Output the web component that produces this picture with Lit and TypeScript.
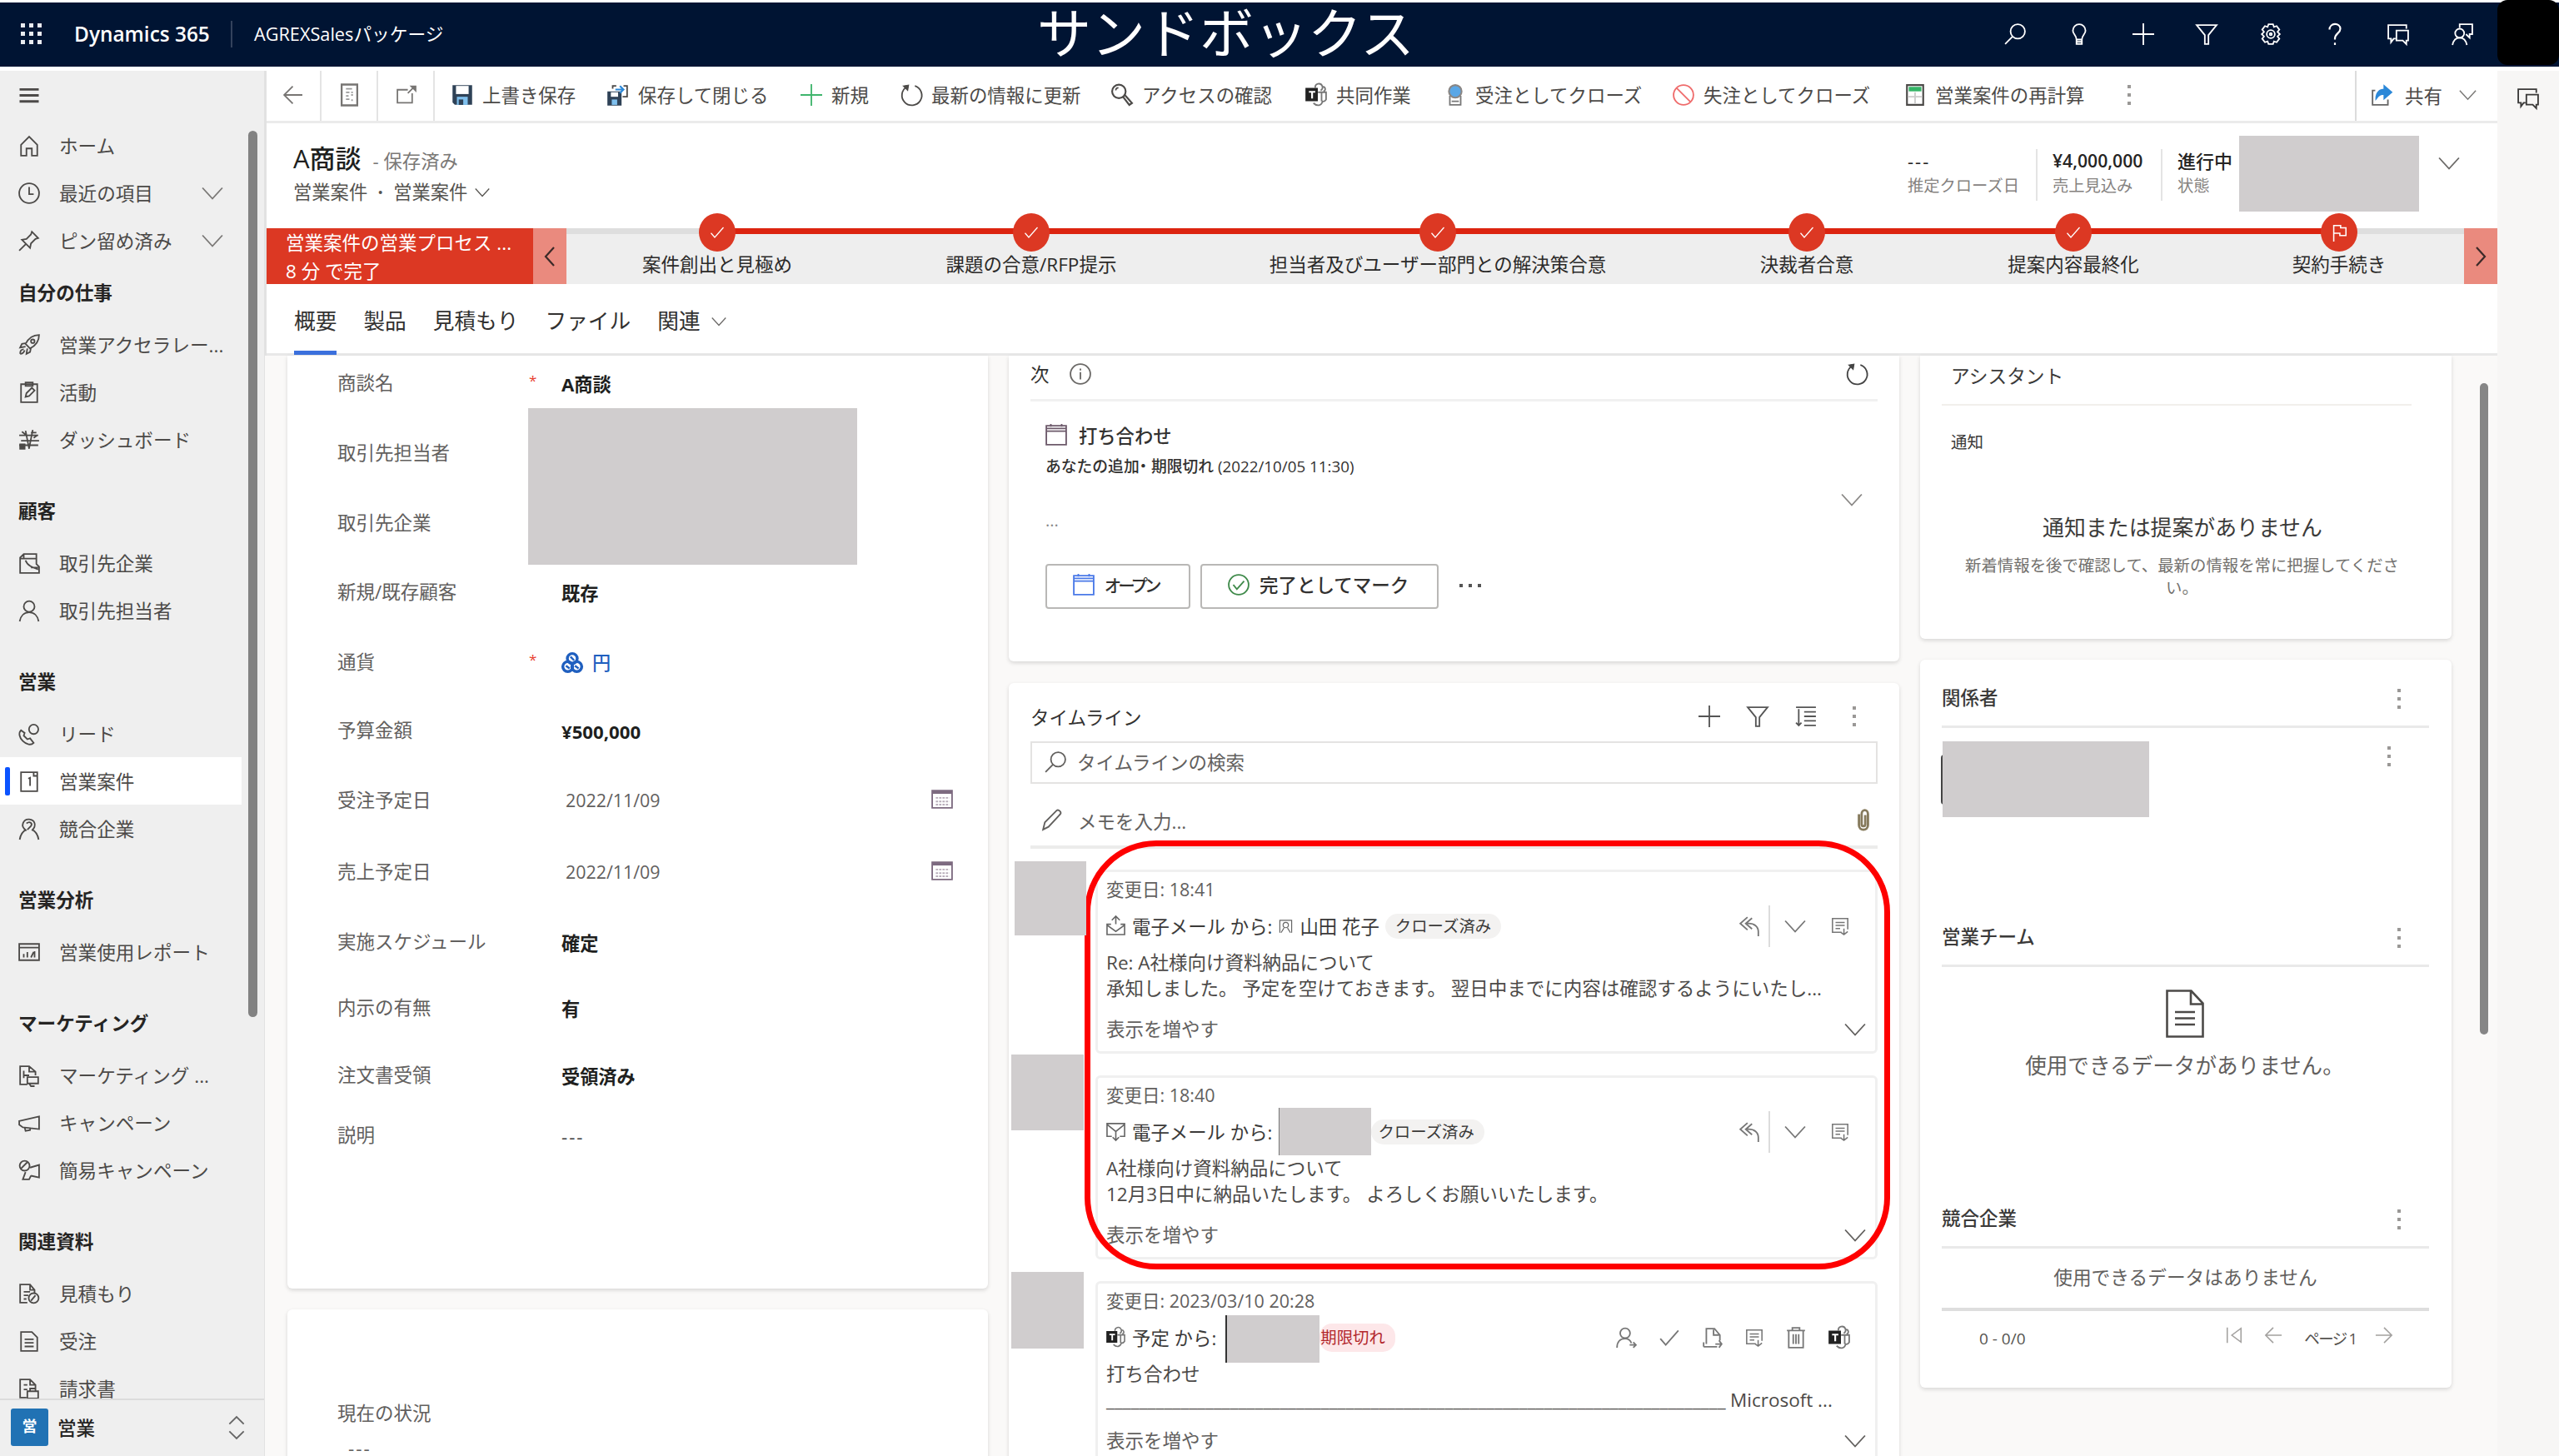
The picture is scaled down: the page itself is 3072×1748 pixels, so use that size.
import {css, html, LitElement, nothing, svg, TemplateResult} from "lit";
import {customElement, property} from "lit/decorators.js";
import {classMap} from "lit/directives/class-map.js";
import {styleMap} from "lit/directives/style-map.js";

// All glyphs are drawn on a 24x24 grid with the current text colour.
const glyphs: Record<string, TemplateResult> = {
    menu: svg`<path d="M0 4.5h24M0 12h24M0 19.5h24" stroke-width="3"/>`,
    home: svg`<path d="M3 11 12 2l9 9v12h-6v-8H9v8H3z"/>`,
    clock: svg`<circle cx="12" cy="12" r="11"/><path d="M12 5v8h5"/>`,
    pin: svg`<path d="M15 2l7 7-3 1-5 5-1 5-9-9 5-1 5-5zM8 16l-7 7"/>`,
    rocket: svg`<path d="M23 1c-7 0-12 4-15 10l5 5C19 13 23 8 23 1zM9 10l-5 1-2 4 6-1M14 15l-1 5-4 2 1-6M2 22c0-3 1-5 4-5M2 22c3 0 4-1 5-4"/><circle cx="16" cy="8" r="2"/>`,
    activity: svg`<path d="M3 3h18v20H3zM8 1h8v4H8zM8 17l1-4 6-6 3 3-6 6z"/>`,
    dashboard: svg`<path d="M1 7h21M3 13h20M1 18h21M8 2l4 20M16 1l-4 20M4 3l5 4M14 4h6M17 10l4-3"/><path d="M2 17h5v5H2z" fill="currentColor"/>`,
    account: svg`<path d="M2 23V6l4-4h14v11l3 3v7zM6 2v5H2M6 7h14M8 9c2 6 8 8 14 10M14 17h8"/>`,
    person: svg`<circle cx="12" cy="7.5" r="6"/><path d="M1.5 24c1-6 5-10 10.500-10s9.500 4 10.500 10"/>`,
    lead: svg`<circle cx="17" cy="7" r="5.200"/><path d="M3 8c-3 3-2 8 2 12s9 5 12 2l-4-5-3 1-4-4 1-3z"/>`,
    opportunity: svg`<path d="M3 2h18v21H3zM17 2v4h4M11 9l2-1v9"/>`,
    competitor: svg`<path d="M1.500 24c1-6 3-9 7-11M22.500 24c-1-6-3-9-7-11M9 14c-8-5-3-13 3-12.500S21 8 15 14M9 6c4-3 7 0 5 3l-4 4"/>`,
    report: svg`<path d="M1 3h22v18H1zM1 7h22M6 18v-4M10 18v-6M14 18l3-6M18 18v-7"/>`,
    list: svg`<path d="M10 22H2V2h10l7 6v4M12 2v6h7M6 7v8M6 12h6M10 14h12v7H10zM12 21l2 3h4"/>`,
    campaign: svg`<path d="M1 10 23 5v14L5 17l-4-3zM7 17l1 4 5-1v-3"/>`,
    quick: svg`<path d="M13 9l10-3v14l-9-2M8 14l-3 8h7l2-4"/><circle cx="7" cy="7" r="5.500"/><path d="M3 10l7-7"/>`,
    quote: svg`<path d="M10 22H2V2h11l5 6v3M13 2v6h5M6 10h7M6 14h5M6 18h3"/><circle cx="17" cy="17" r="5.500"/><path d="M14 20l5-6"/>`,
    order: svg`<path d="M3 2h12l6 6v15H3zM7 10h10M7 14h10M7 18h10"/>`,
    invoice: svg`<path d="M9 22H2V2h11l6 6v4M13 2v6h6M6 8h4M6 13h4M10 15h12v8H10zM13 15v-3h6v3"/>`,
    updown: svg`<path d="M4 8l8-8 8 8M4 16l8 8 8-8"/>`,
    down: svg`<path d="M1 6l11 12L23 6"/>`,
    left: svg`<path d="M17 1 7 12l10 11"/>`,
    right: svg`<path d="M7 1l10 11L7 23"/>`,
    back: svg`<path d="M23 12H2M12 2 2 12l10 10"/>`,
    forward: svg`<path d="M1 12h21M12 2l10 10-10 10"/>`,
    first: svg`<path d="M3 2v20M21 3v18L9 12z"/>`,
    form: svg`<path d="M3 0h18v24H3z" stroke-width="2.200"/><path d="M8 5h7M8 9h4M14 9h2M8 13h3M14 12h2M8 17h4M15 17v2" stroke="#999"/>`,
    popout: svg`<path d="M14 6H2v15h17V10M14 10l7-7"/><path d="M18 2h5v5z" fill="currentColor"/>`,
    save: svg`<path d="M2 2h20v20H4l-2-2z" fill="#2f4257" stroke="#2f4257"/><path d="M5 2h14v9H5z" fill="#fff" stroke="none"/><path d="M6 14h12v9H6z" fill="#7fc0ee" stroke="none"/><path d="M8 17h5v6H8z" fill="#2f4257" stroke="none"/>`,
    saveclose: svg`<path d="M1 9h14v14H1z" fill="#2f4257" stroke="#2f4257"/><path d="M4 9h8v5H4z" fill="#fff" stroke="none"/><path d="M5 17h6v6H5z" fill="#7fc0ee" stroke="none"/><path d="M6 5V2h4M18 2h4v12h-5"/><path d="M9 6h8M14 2l4 4-4 4" stroke="#2b88d8" stroke-width="2"/>`,
    plus: svg`<path d="M12 0v24M0 12h24"/>`,
    refresh: svg`<path d="M16 2a11 11 0 1 1-9 1"/><path d="M3 2l6-1-1 6z" fill="currentColor" stroke-width="1"/>`,
    key: svg`<circle cx="8.500" cy="8" r="7.500" stroke-width="2"/><path d="M13 14l7 9 3-2-8-9" stroke-width="2"/><path d="M5 7a3 3 0 0 1 3-3" stroke-width="1.500"/>`,
    teams: svg`<path d="M11 4a4 4 0 1 1 6 3M19 3a2.500 2.500 0 1 1 1 5M14 9h9v8c-2 3-4 2-4 2-1 5-6 6-10 2M18 9v10" stroke="#777"/><path d="M1 5h12v13H1z" fill="#222" stroke="#222"/><path d="M4 8.500h7M7.500 8.500V16" stroke="#fff" stroke-width="2"/>`,
    ribbon: svg`<path d="M6 13v10h12V13M8 19h8" stroke="#777"/><circle cx="12" cy="8" r="7" fill="#5aa7e6" stroke="#8a8684" stroke-width="2"/>`,
    ban: svg`<circle cx="12" cy="12" r="11"/><path d="M4.500 4.500l15 15"/>`,
    calc: svg`<path d="M3 1h18v22H3z" stroke-width="2"/><path d="M5 3h14v5H5z" fill="#35b567" stroke="none"/><path d="M12 9v13M4 14h16" stroke="#ccc"/>`,
    share: svg`<path d="M5 7H2v16h17v-6" stroke="#666"/><path d="M6 16c0-7 4-10 9-10V2l8 7-8 7v-5c-4 0-6 1-9 5z" fill="#2b88d8" stroke="#2b88d8"/>`,
    search: svg`<circle cx="15" cy="9" r="8"/><path d="M9.500 14.500 1 23"/>`,
    bulb: svg`<path d="M9 18c0-5-4-6-4-10a7 7 0 0 1 14 0c0 4-4 5-4 10zM9 18v5h6v-5M9 20.500h6"/>`,
    filter: svg`<path d="M1 2h22l-9 11v10h-4V13z"/>`,
    gear: svg`<path d="M9.500 1h5l1 3 3-1 3 4-2 2.500 2.500 2.500-2.500 2.500 2 2.500-3 4-3-1-1 3h-5l-1-3-3 1-3-4 2-2.500L2 12l2.500-2.500-2-2.500 3-4 3 1z"/><circle cx="12" cy="12" r="4.500"/><circle cx="12" cy="12" r="1.200"/>`,
    help: svg`<path d="M6 7c0-8 12-8 12-1 0 5-6 5-6 11v1M12 21.500V24" stroke-width="2"/>`,
    chat: svg`<path d="M9 17H7l-3 4v-4H1V2h20v4M10 8h13v11h-2v4l-4-4h-7z"/>`,
    feedback: svg`<path d="M9 5V1h14v11h-3v4l-4-4"/><circle cx="9" cy="11" r="5"/><path d="M1 24c1-5 4-8 8-8s7 3 8 8"/>`,
    check: svg`<path d="M2 13l6 7L22 4"/>`,
    flag: svg`<path d="M5 24V3h9v3h7v10h-8v-3H5"/>`,
    info: svg`<circle cx="12" cy="12" r="11"/><path d="M12 10v8M12 6v2"/>`,
    calendar: svg`<path d="M1 2h22v21H1zM1 8h22M1 5h22M6 0v3M18 0v3"/>`,
    datepicker: svg`<path d="M1 3h22v19H1z"/><path d="M1 5h22" stroke-width="3"/><path d="M5 11h15M5 15h15M5 18.500h15" stroke="#b9aebb" stroke-dasharray="2.500 1.200"/>`,
    done: svg`<circle cx="12" cy="12" r="11"/><path d="M6 12l4 5 8-9"/>`,
    sort: svg`<path d="M1 2h22M10 7h13M10 12h13M10 17h13M10 22h13M4 4v18M1 19l3 3 3-3"/>`,
    pencil: svg`<path d="M2 23l2-8L17 2c2-2 6 2 4 4L8 20z"/>`,
    clip: svg`<path d="M7 6v12c0 7 10 7 10 0V6c0-6-7-6-7 0v11c0 3 4 3 4 0V7" stroke="#867a5c" stroke-width="2.600"/>`,
    mailin: svg`<path d="M6 10H1v13h22V10h-5M1 11l11 8 11-8M12 0v10M7 5l5-5 5 5"/>`,
    mailout: svg`<path d="M7 18H1V2h22v16h-6M1 3l11 9L23 3M12 23V12M8 19l4 4 4-4"/>`,
    user: svg`<path d="M2 23V2h20v21"/><circle cx="12" cy="10" r="4.500"/><path d="M4 23l5-8M20 23l-5-8"/>`,
    reply: svg`<path d="M10 2 2 9l8 7M15 3 8 9l7 6M9 9c9-1 13 4 13 9v5"/>`,
    note: svg`<path d="M14 20H2V2h20v14M6 7h12M6 11h12M6 15h6M17 15v8M13 20l4 3 5-4"/>`,
    assign: svg`<circle cx="11" cy="7" r="5.500"/><path d="M2 23c0-6 3-10 9-10 4 0 6 2 7 5M16 20h7M20 17l3 3-3 3"/>`,
    convert: svg`<path d="M5 19V2h9l6 7v6M2 22v-5M2 22h15M15 19h7M19 15l3 4-3 4M13 3v6h6"/>`,
    trash: svg`<path d="M2 4h20M8 4V1h8v3M4 4v19h16V4M9 8v11M12 8v11M15 8v11"/>`,
    currency: svg`<g stroke-width="3.200"><circle cx="12" cy="7" r="5.500"/><circle cx="7" cy="16" r="5.500"/><circle cx="17" cy="16" r="5.500"/></g><path d="M10 5l4 4M5 15l4 3M15 15l4 3M9 12h6" stroke-width="2.200"/>`,
};

const icon = (name: string, cls = "") => html`
    <svg class="icon ${cls}" viewBox="0 0 24 24" fill="none" stroke="currentColor">${glyphs[name]}</svg>`;

const dots = (cls = "") => html`<span class="dots ${cls}"><i></i><i></i><i></i></span>`;

const base = css`
    :host {
        display: block;
        box-sizing: border-box;
    }
    * {
        box-sizing: border-box;
    }
    .icon {
        width: 26px;
        height: 26px;
        flex: none;
        stroke-width: 1.7;
        overflow: visible;
    }
    .small {
        width: 18px;
        height: 18px;
    }
    .dots {
        display: flex;
        flex-direction: column;
        gap: 6px;
        flex: none;
    }
    .dots i {
        width: 4px;
        height: 4px;
        background: #9a9896;
    }
    .mask {
        position: absolute;
        background: #d0cdce;
    }
`;

@customElement("top-bar")
class TopBar extends LitElement {
    static styles = [base, css`
        :host {
            height: 85px;
            padding-top: 3px;
            background: #fff;
        }
        .bar {
            position: relative;
            height: 77px;
            background: #001433;
            color: #fff;
            display: flex;
            align-items: center;
            padding: 0 0 2px 25px;
        }
        .waffle {
            display: grid;
            grid-template-columns: repeat(3, 5px);
            gap: 5px;
        }
        .waffle i {
            height: 5px;
            background: #e8ebf0;
        }
        .brand {
            margin-left: 39px;
            width: 188px;
            font-size: 24.400px;
            font-weight: 600;
            white-space: nowrap;
        }
        .app {
            border-left: 2px solid #33425c;
            height: 32px;
            line-height: 31px;
            padding-left: 26px;
            font-size: 21.700px;
            white-space: nowrap;
        }
        .env {
            position: absolute;
            left: 1245px;
            top: -3px;
            line-height: 78px;
            font-size: 65px;
        }
        .actions {
            margin-left: auto;
            margin-right: 103px;
            display: flex;
            gap: 50.700px;
        }
        .avatar {
            position: absolute;
            right: 0;
            top: -3px;
            width: 74px;
            height: 78px;
            border-radius: 12px;
            background: #000;
        }
    `];

    protected render(): unknown {
        return html`
            <div class="bar">
                <div class="waffle">${Array.from({length: 9}, () => html`<i></i>`)}</div>
                <div class="brand">Dynamics 365</div>
                <div class="app">AGREXSalesパッケージ</div>
                <div class="env">サンドボックス</div>
                <div class="actions">
                    ${["search", "bulb", "plus", "filter", "gear", "help", "chat", "feedback"].map(n => icon(n))}
                </div>
                <div class="avatar"></div>
            </div>
        `;
    }
}

interface NavEntry {
    text: string;
    icon?: string;
    expand?: boolean;
    selected?: boolean;
}

@customElement("side-nav")
class SideNav extends LitElement {
    static styles = [base, css`
        :host {
            width: 320px;
            height: 1663px;
            background: #efefef;
            border-right: 3px solid #e2e2e2;
            color: #4c4a48;
            font-size: 22.600px;
            display: flex;
            flex-direction: column;
            position: relative;
        }
        .toggle {
            height: 61px;
            padding: 17px 22px;
            flex: none;
        }
        .toggle .icon {
            height: 23px;
        }
        .list {
            flex: 1;
            min-height: 0;
            overflow: hidden;
        }
        .item {
            height: 57px;
            width: 290px;
            display: flex;
            align-items: center;
            padding-left: 22px;
            white-space: nowrap;
        }
        .item .text {
            margin-left: 23px;
            width: 171px;
        }
        .item .down {
            color: #7a7876;
        }
        .selected {
            background: #fff;
            padding-left: 6px;
        }
        .selected::before {
            content: "";
            width: 6px;
            height: 34px;
            margin-right: 10px;
            background: #0b53ff;
            border-radius: 2px;
        }
        .group {
            height: 91px;
            padding: 41px 22px 0;
            line-height: 34px;
            font-weight: 600;
            color: #252423;
        }
        .group.first {
            height: 68px;
            padding-top: 18px;
        }
        .thumb {
            position: absolute;
            left: 298px;
            top: 72px;
            width: 11px;
            height: 1064px;
            border-radius: 6px;
            background: #828282;
        }
        .area {
            height: 69px;
            flex: none;
            border-top: 2px solid #dcdcdc;
            display: flex;
            align-items: center;
            padding: 0 0 2px 13px;
            font-weight: 500;
            color: #252423;
        }
        .badge {
            width: 45px;
            height: 45px;
            line-height: 43px;
            margin-right: 11px;
            border-radius: 3px;
            background: #2172b4;
            color: #fff;
            font-size: 18px;
            font-weight: 700;
            text-align: center;
        }
        .area .icon {
            margin-left: auto;
            margin-right: 20px;
            color: #666;
        }
    `];

    entries: NavEntry[] = [
        {text: "ホーム", icon: "home"},
        {text: "最近の項目", icon: "clock", expand: true},
        {text: "ピン留め済み", icon: "pin", expand: true},
        {text: "自分の仕事"},
        {text: "営業アクセラレー...", icon: "rocket"},
        {text: "活動", icon: "activity"},
        {text: "ダッシュボード", icon: "dashboard"},
        {text: "顧客"},
        {text: "取引先企業", icon: "account"},
        {text: "取引先担当者", icon: "person"},
        {text: "営業"},
        {text: "リード", icon: "lead"},
        {text: "営業案件", icon: "opportunity", selected: true},
        {text: "競合企業", icon: "competitor"},
        {text: "営業分析"},
        {text: "営業使用レポート", icon: "report"},
        {text: "マーケティング"},
        {text: "マーケティング ...", icon: "list"},
        {text: "キャンペーン", icon: "campaign"},
        {text: "簡易キャンペーン", icon: "quick"},
        {text: "関連資料"},
        {text: "見積もり", icon: "quote"},
        {text: "受注", icon: "order"},
        {text: "請求書", icon: "invoice"},
    ];

    protected render(): unknown {
        return html`
            <div class="toggle">${icon("menu")}</div>
            <div class="list">
                ${this.entries.map((e, i) => e.icon ? html`
                    <div class=${classMap({item: true, selected: !!e.selected})}>
                        ${icon(e.icon)}<span class="text">${e.text}</span>${e.expand ? icon("down", "down") : nothing}
                    </div>` : html`<div class=${classMap({group: true, first: i === 3})}>${e.text}</div>`)}
            </div>
            <div class="thumb"></div>
            <div class="area"><span class="badge">営</span>営業${icon("updown")}</div>
        `;
    }
}

@customElement("command-bar")
class CommandBar extends LitElement {
    static styles = [base, css`
        :host {
            height: 63px;
            border-bottom: 3px solid #ebebeb;
            display: flex;
            font-size: 22.450px;
            color: #4c4a48;
        }
        .tool {
            width: 68px;
            border-right: 2px solid #e4e4e4;
            display: flex;
            align-items: center;
            justify-content: center;
            padding-bottom: 2px;
        }
        .tool .icon {
            width: 25px;
            color: #777573;
        }
        .commands {
            display: grid;
            grid-template-columns: 187px 232px 120px 253px 233px 167px 274px 278px 268px 20px;
            align-items: center;
            padding: 0 0 3px 20px;
            white-space: nowrap;
        }
        .command {
            display: flex;
            align-items: center;
            gap: 11px;
        }
        .plus {
            color: #3fb56c;
        }
        .ban {
            color: #ef6b6b;
        }
        .share {
            margin-left: auto;
            width: 171px;
            border-left: 2px solid #dcdcdc;
            display: flex;
            align-items: center;
            padding: 0 0 2px 17px;
            gap: 15px;
        }
        .share .down {
            width: 21px;
            margin-left: 5px;
            color: #7a7876;
        }
    `];

    commands = [
        ["save", "上書き保存"],
        ["saveclose", "保存して閉じる"],
        ["plus", "新規"],
        ["refresh", "最新の情報に更新"],
        ["key", "アクセスの確認"],
        ["teams", "共同作業"],
        ["ribbon", "受注としてクローズ"],
        ["ban", "失注としてクローズ"],
        ["calc", "営業案件の再計算"],
    ];

    protected render(): unknown {
        return html`
            <div class="tool">${icon("back")}</div>
            <div class="tool">${icon("form")}</div>
            <div class="tool">${icon("popout")}</div>
            <div class="commands">
                ${this.commands.map(([name, text]) => html`<div class="command">${icon(name, name)}${text}</div>`)}
                ${dots()}
            </div>
            <div class="share">${icon("share")}共有${icon("down", "down")}</div>
        `;
    }
}

@customElement("record-header")
class RecordHeader extends LitElement {
    static styles = [base, css`
        :host {
            height: 126px;
            display: flex;
            justify-content: space-between;
            position: relative;
            padding: 19px 45px 0 34px;
            white-space: nowrap;
        }
        .title {
            height: 46px;
            line-height: 46px;
            font-size: 31px;
            font-weight: 500;
            color: #201f1e;
        }
        .title small {
            font-size: 22.300px;
            font-weight: 400;
            color: #7a7876;
            margin-left: 14px;
        }
        .sub {
            height: 36px;
            line-height: 36px;
            font-size: 22.300px;
            color: #55534f;
            display: flex;
            align-items: center;
        }
        .sub b {
            width: 31px;
            text-align: center;
        }
        .sub .icon {
            margin-left: 9px;
        }
        .facts {
            display: flex;
            padding-top: 12px;
        }
        .fact {
            height: 62px;
            padding-left: 18px;
            border-left: 2px solid #e4e4e4;
            font-size: 19.300px;
            line-height: 31px;
            color: #85827f;
        }
        .fact:first-child {
            border: 0;
            width: 154px;
            padding: 0;
        }
        .fact:nth-child(2) {
            width: 150px;
        }
        .fact:nth-child(3) {
            width: 333px;
        }
        .fact b {
            display: block;
            font-size: 22px;
            line-height: 28px;
            font-weight: 500;
            color: #252423;
        }
        .fact .money {
            font-size: 21.200px;
            font-weight: 600;
        }
        .fact .blank {
            letter-spacing: 2px;
        }
        .owner {
            left: 2370px;
            top: 15px;
            width: 216px;
            height: 91px;
        }
        .facts > .icon {
            margin-top: 4px;
            color: #6b6967;
        }
    `];

    protected render(): unknown {
        return html`
            <div>
                <div class="title">A商談<small>- 保存済み</small></div>
                <div class="sub">営業案件<b>·</b>営業案件${icon("down", "small")}</div>
            </div>
            <div class="facts">
                <div class="fact"><b class="blank">---</b>推定クローズ日</div>
                <div class="fact"><b class="money">¥4,000,000</b>売上見込み</div>
                <div class="fact"><b>進行中</b>状態</div>
                ${icon("down")}
            </div>
            <div class="mask owner"></div>
        `;
    }
}

@customElement("process-flow")
class ProcessFlow extends LitElement {
    static styles = [base, css`
        :host {
            height: 67px;
            display: flex;
            white-space: nowrap;
        }
        .name {
            width: 322px;
            padding: 1px 0 0 25px;
            background: #dc3823;
            color: #fff;
            font-size: 22.500px;
            line-height: 34px;
        }
        .arrow {
            width: 40px;
            background: #ea8a7e;
            color: #3b2a28;
            display: flex;
            align-items: center;
            justify-content: center;
        }
        .arrow .icon {
            width: 24px;
            height: 24px;
            stroke-width: 2.2;
        }
        .stage {
            position: relative;
            background: #eee;
            border-top: 7px solid #dc2410;
            padding-top: 21px;
            text-align: center;
            font-size: 22.500px;
            line-height: 32px;
            color: #2b2a29;
        }
        .stage.start::before, .stage.end::before {
            content: "";
            position: absolute;
            top: -7px;
            left: 0;
            width: 50%;
            height: 7px;
            background: #dedede;
        }
        .stage.end::before {
            left: 50%;
        }
        .dot {
            position: absolute;
            left: calc(50% - 22px);
            top: -25px;
            width: 44px;
            height: 46px;
            border-radius: 50%;
            background: #dc3823;
            color: #fff;
            display: flex;
            align-items: center;
            justify-content: center;
        }
        .dot .icon {
            width: 18px;
            height: 18px;
        }
        .dot .flag {
            width: 22px;
            height: 22px;
        }
    `];

    stages: [string, number][] = [
        ["案件創出と見極め", 362],
        ["課題の合意/RFP提示", 392],
        ["担当者及びユーザー部門との解決策合意", 584],
        ["決裁者合意", 302],
        ["提案内容最終化", 338],
        ["契約手続き", 300],
    ];

    protected render(): unknown {
        const last = this.stages.length - 1;
        return html`
            <div class="name">営業案件の営業プロセス ...<br>8 分 で完了</div>
            <div class="arrow">${icon("left")}</div>
            ${this.stages.map(([text, width], i) => html`
                <div class=${classMap({stage: true, start: i === 0, end: i === last})} style=${styleMap({width: `${width}px`})}>
                    <span class="dot">${i === last ? icon("flag", "flag") : icon("check")}</span>${text}
                </div>`)}
            <div class="arrow">${icon("right")}</div>
        `;
    }
}

@customElement("tab-strip")
class TabStrip extends LitElement {
    static styles = [base, css`
        :host {
            height: 86px;
            border-bottom: 3px solid #e8e8e8;
            display: flex;
            gap: 32px;
            padding-left: 35px;
            font-size: 25.700px;
            line-height: 90px;
            color: #323130;
            white-space: nowrap;
        }
        .active {
            height: 85px;
            border-bottom: 5px solid #3b70dd;
        }
        .more {
            height: 90px;
            display: flex;
            align-items: center;
            gap: 13px;
        }
        .more .icon {
            color: #6b6967;
        }
    `];

    protected render(): unknown {
        return html`
            <span class="active">概要</span><span>製品</span><span>見積もり</span><span>ファイル</span>
            <span class="more">関連${icon("down", "small")}</span>
        `;
    }
}

interface Field {
    label: string;
    value?: string;
    step: number;
    required?: boolean;
    kind?: "date" | "link" | "empty";
}

@customElement("summary-column")
class SummaryColumn extends LitElement {
    static styles = [base, css`
        :host {
            width: 841px;
            position: relative;
        }
        .card {
            background: #fff;
            box-shadow: 0 2px 5px rgba(0, 0, 0, .14);
            padding-left: 60px;
        }
        .fields {
            height: 1120px;
            padding-top: 13px;
            border-radius: 0 0 6px 6px;
        }
        .status {
            margin-top: 25px;
            height: 240px;
            padding-top: 104px;
            border-radius: 6px;
            font-size: 22.500px;
            line-height: 42px;
            color: #62605e;
        }
        .status p {
            margin: 0 0 0 13px;
            letter-spacing: 2px;
        }
        .field {
            display: flex;
            font-size: 22.500px;
            line-height: 40px;
        }
        .label {
            width: 230px;
            color: #62605e;
        }
        .star {
            width: 39px;
            font-size: 17px;
            line-height: 34px;
            color: #e8402f;
        }
        .value {
            flex: 1;
            height: 40px;
            padding-top: 4px;
            font-size: 22.200px;
            font-weight: 700;
            color: #201f1e;
            display: flex;
            align-items: center;
        }
        .date {
            padding: 0 41px 0 5px;
            justify-content: space-between;
            font-weight: 400;
            font-size: 21.400px;
            color: #62605e;
        }
        .date .icon {
            width: 28px;
            height: 26px;
            color: #7d6a80;
            margin-top: -4px;
        }
        .link {
            padding-top: 2px;
            gap: 11px;
            color: #1f5fbf;
            font-weight: 500;
        }
        .empty {
            font-weight: 500;
            color: #444;
            letter-spacing: 2px;
        }
        .contact {
            left: 289px;
            top: 63px;
            width: 395px;
            height: 188px;
        }
    `];

    // step is the distance down to the next field
    fields: Field[] = [
        {label: "商談名", value: "A商談", step: 84, required: true},
        {label: "取引先担当者", step: 84},
        {label: "取引先企業", step: 83},
        {label: "新規/既存顧客", value: "既存", step: 84},
        {label: "通貨", value: "円", step: 82, required: true, kind: "link"},
        {label: "予算金額", value: "¥500,000", step: 84},
        {label: "受注予定日", value: "2022/11/09", step: 86, kind: "date"},
        {label: "売上予定日", value: "2022/11/09", step: 84, kind: "date"},
        {label: "実施スケジュール", value: "確定", step: 79},
        {label: "内示の有無", value: "有", step: 81},
        {label: "注文書受領", value: "受領済み", step: 72},
        {label: "説明", value: "---", step: 40, kind: "empty"},
    ];

    protected render(): unknown {
        return html`
            <div class="card fields">
                ${this.fields.map(f => html`
                    <div class="field" style=${styleMap({height: `${f.step}px`})}>
                        <span class="label">${f.label}</span>
                        <span class="star">${f.required ? "*" : ""}</span>
                        <span class="value ${f.kind ?? ""}">
                            ${f.kind === "link" ? icon("currency") : nothing}${f.value}
                            ${f.kind === "date" ? icon("datepicker") : nothing}
                        </span>
                    </div>`)}
            </div>
            <div class="card status">現在の状況<p>---</p></div>
            <div class="mask contact"></div>
        `;
    }
}

@customElement("next-card")
class NextCard extends LitElement {
    static styles = [base, css`
        :host {
            height: 367px;
            background: #fff;
            border-radius: 0 0 6px 6px;
            box-shadow: 0 2px 5px rgba(0, 0, 0, .14);
            padding: 0 26px;
            color: #323130;
            font-size: 22.500px;
            white-space: nowrap;
        }
        .head {
            height: 55px;
            border-bottom: 3px solid #f1f1f1;
            display: flex;
            align-items: center;
            padding: 0 12px 9px 0;
        }
        .head .icon {
            margin-left: 24px;
            color: #6b6967;
        }
        .head .refresh {
            margin-left: auto;
            color: #444;
        }
        .body {
            padding: 19px 18px 0 18px;
        }
        .subject {
            display: flex;
            align-items: center;
            gap: 14px;
            height: 42px;
            font-size: 22.300px;
            font-weight: 500;
        }
        .subject .icon {
            color: #6d5a6b;
        }
        .meta {
            font-size: 18.800px;
            line-height: 34px;
            font-weight: 500;
            font-feature-settings: "halt";
        }
        .toggle {
            display: flex;
            justify-content: flex-end;
            height: 28px;
            padding-top: 10px;
            color: #8a8886;
        }
        .more {
            height: 72px;
            line-height: 40px;
            font-size: 20px;
            color: #888;
        }
        .buttons {
            display: flex;
            align-items: center;
            gap: 12px;
        }
        .button {
            height: 54px;
            border: 2px solid #b9b8b6;
            border-radius: 4px;
            display: flex;
            align-items: center;
            gap: 12px;
            padding: 0 0 5px 31px;
            width: 286px;
            font-weight: 500;
        }
        .open {
            width: 174px;
            font-size: 20.500px;
            font-feature-settings: "palt";
            letter-spacing: -2.500px;
        }
        .open .icon {
            color: #4a79e8;
        }
        .done {
            color: #3f8a4a;
        }
        .ellipsis {
            display: flex;
            gap: 7px;
            margin-left: 13px;
            padding-bottom: 2px;
        }
        .ellipsis i {
            width: 4px;
            height: 4px;
            background: #555;
        }
    `];

    protected render(): unknown {
        return html`
            <div class="head">次${icon("info")}${icon("refresh", "refresh")}</div>
            <div class="body">
                <div class="subject">${icon("calendar")}打ち合わせ</div>
                <div class="meta">あなたの追加・ 期限切れ (2022/10/05 11:30)</div>
                <div class="toggle">${icon("down")}</div>
                <div class="more">...</div>
                <div class="buttons">
                    <span class="button open">${icon("calendar")}オープン</span>
                    <span class="button">${icon("done", "done")}完了としてマーク</span>
                    <span class="ellipsis"><i></i><i></i><i></i></span>
                </div>
            </div>
        `;
    }
}

@customElement("timeline-post")
class TimelinePost extends LitElement {
    @property({ type: String })
    date = "";
    @property({ type: String })
    glyph = "";
    @property({ type: String })
    kind = "";
    @property({ type: String })
    sender = "";
    @property({ type: String })
    state = "";
    @property({ type: String })
    subject = "";
    @property({ type: String })
    summary = "";
    @property({ type: Boolean })
    overdue = false;

    static styles = [base, css`
        :host {
            position: relative;
            height: 221px;
            margin: 0 0 26px 78px;
            padding: 6px 11px 0 10px;
            border: 3px solid #f0f0f0;
            border-radius: 6px;
            color: #4c4a48;
            font-size: 22.500px;
            white-space: nowrap;
        }
        .date {
            line-height: 30px;
            font-size: 21.500px;
            color: #62605e;
        }
        .head {
            height: 57px;
            display: flex;
            align-items: center;
            font-size: 22.400px;
            color: #3b3a39;
        }
        .kind {
            margin: 0 8px 0 8px;
        }
        .who {
            display: flex;
            align-items: center;
            gap: 8px;
        }
        .head .type, .who .icon {
            width: 23px;
            height: 23px;
            color: #666;
        }
        .who .icon {
            width: 17px;
            height: 20px;
        }
        .hidden {
            width: 111px;
            height: 57px;
            background: #d0cdce;
            border-left: 1px solid #777;
        }
        .pill {
            margin-left: 7px;
            height: 30px;
            line-height: 29px;
            padding: 0 12px;
            border-radius: 15px;
            background: #f3f2f1;
            font-size: 19.400px;
        }
        .hidden + .pill {
            margin-left: 0;
            padding-left: 8px;
        }
        .hidden.late {
            width: 113px;
            margin: 4px 0 0 3px;
            border-left: 2px solid #333;
        }
        .hidden + .overdue {
            padding-left: 1px;
            background: #fde7e9;
            color: #b3282d;
            height: 34px;
            line-height: 33px;
        }
        .actions {
            margin-left: auto;
            display: flex;
            align-items: center;
            color: #777;
        }
        .split {
            height: 50px;
            border-left: 2px solid #dcdcdc;
            margin: 0 17px 0 10px;
        }
        .actions .note {
            width: 22px;
            margin: 0 20px 0 30px;
        }
        .tasks {
            gap: 26px;
            margin-right: 19px;
        }
        .tasks .note {
            margin: 0;
        }
        .line {
            display: flex;
            line-height: 31px;
        }
        .rule {
            width: 744px;
            margin-right: 5px;
            letter-spacing: .060px;
        }
        .show {
            display: flex;
            justify-content: space-between;
            align-items: center;
            padding-top: 16px;
            line-height: 35px;
            color: #62605e;
        }
    `];

    protected render(): unknown {
        return html`
            <div class="date">変更日: ${this.date}</div>
            <div class="head">
                ${icon(this.glyph, "type")}
                <span class="kind">${this.kind} から:</span>
                ${this.sender ? html`<span class="who">${icon("user")}${this.sender}</span>` : html`<span class=${classMap({hidden: true, late: this.overdue})}></span>`}<span class=${classMap({pill: true, overdue: this.overdue})}>${this.state}</span>
                ${this.overdue ? html`
                    <span class="actions tasks">
                        ${icon("assign")}${icon("check")}${icon("convert")}${icon("note", "note")}${icon("trash")}${icon("teams")}
                    </span>` : html`
                    <span class="actions">
                        ${icon("reply")}<i class="split"></i>${icon("down")}${icon("note", "note")}
                    </span>`}
            </div>
            <div class="line">${this.subject}</div>
            <div class="line">${this.overdue ? html`<span class="rule">${"_".repeat(75)}</span>` : nothing}${this.summary}</div>
            <div class="show">表示を増やす${icon("down")}</div>
        `;
    }
}

@customElement("timeline-card")
class TimelineCard extends LitElement {
    static styles = [base, css`
        :host {
            position: relative;
            margin-top: 26px;
            height: 1000px;
            background: #fff;
            border-radius: 6px;
            box-shadow: 0 2px 5px rgba(0, 0, 0, .14);
            padding: 19px 26px 0;
            font-size: 22.500px;
            color: #3b3a39;
            white-space: nowrap;
        }
        .head {
            height: 51px;
            padding: 0 26px 9px 0;
            display: flex;
            align-items: center;
            gap: 32px;
            color: #555;
        }
        .head b {
            font-weight: 400;
            margin-right: auto;
            color: #323130;
        }
        .head .dots {
            margin-left: 11px;
        }
        .search {
            height: 51px;
            border: 2px solid #e4e3e2;
            display: flex;
            align-items: center;
            padding: 0 0 2px 15px;
            gap: 13px;
            color: #62605e;
        }
        .memo {
            height: 78px;
            border-bottom: 4px solid #ececeb;
            margin-bottom: 25px;
            padding: 12px 4px 0 13px;
            display: flex;
            align-items: center;
            color: #62605e;
        }
        .memo span {
            margin: 2px auto 0 18px;
        }
        .first {
            left: 7px;
            top: 214px;
            width: 86px;
            height: 89px;
        }
        .second {
            left: 3px;
            top: 446px;
            width: 87px;
            height: 91px;
        }
        .third {
            left: 3px;
            top: 707px;
            width: 87px;
            height: 92px;
        }
        .highlight {
            position: absolute;
            left: 91px;
            top: 189px;
            width: 967px;
            height: 515px;
            border: 7px solid #fe0000;
            border-radius: 86px;
        }
    `];

    protected render(): unknown {
        return html`
            <div class="head"><b>タイムライン</b>${icon("plus")}${icon("filter")}${icon("sort")}${dots()}</div>
            <div class="search">${icon("search")}タイムラインの検索</div>
            <div class="memo">${icon("pencil")}<span>メモを入力...</span>${icon("clip")}</div>
            <timeline-post date="18:41" glyph="mailin" kind="電子メール" sender="山田 花子" state="クローズ済み"
                subject="Re: A社様向け資料納品について"
                summary="承知しました。 予定を空けておきます。 翌日中までに内容は確認するようにいたし..."></timeline-post>
            <timeline-post date="18:40" glyph="mailout" kind="電子メール" state="クローズ済み"
                subject="A社様向け資料納品について"
                summary="12月3日中に納品いたします。 よろしくお願いいたします。"></timeline-post>
            <timeline-post date="2023/03/10 20:28" glyph="teams" kind="予定" state="期限切れ" overdue
                subject="打ち合わせ" summary="Microsoft ..."></timeline-post>
            <div class="highlight"></div>
            <div class="mask first"></div>
            <div class="mask second"></div>
            <div class="mask third"></div>
        `;
    }
}

@customElement("related-column")
class RelatedColumn extends LitElement {
    static styles = [base, css`
        :host {
            width: 638px;
            color: #3b3a39;
            font-size: 22.500px;
            white-space: nowrap;
        }
        .card {
            position: relative;
            background: #fff;
            box-shadow: 0 2px 5px rgba(0, 0, 0, .14);
            padding: 0 27px 0 26px;
        }
        .assistant {
            height: 340px;
            border-radius: 0 0 6px 6px;
        }
        .assistant h3 {
            margin: 0 21px 0 0;
            height: 60px;
            padding: 8px 0 0 11px;
            line-height: 34px;
            font-size: 22.700px;
            font-weight: 400;
            border-bottom: 2px solid #f1efec;
        }
        .notice {
            margin: 29px 0 0 11px;
            font-size: 19.500px;
            line-height: 30px;
        }
        .none {
            margin: 68px 7px 0 0;
            text-align: center;
            font-size: 25.900px;
            line-height: 38px;
        }
        .hint {
            margin: 13px 27px 0 19px;
            text-align: center;
            white-space: normal;
            font-size: 19.400px;
            line-height: 27px;
            color: #73716e;
        }
        .related {
            margin-top: 25px;
            height: 874px;
            border-radius: 6px;
            padding-top: 29px;
        }
        .head {
            height: 53px;
            border-bottom: 3px solid #e9e9e9;
            padding: 0 34px 20px 0;
            display: flex;
            align-items: flex-end;
            justify-content: space-between;
            line-height: 26px;
            font-weight: 500;
        }
        .stakeholders {
            height: 234px;
            display: flex;
            justify-content: flex-end;
            padding: 22px 46px 0 0;
        }
        .team {
            height: 285px;
            padding: 27px 0 0;
            display: flex;
            flex-direction: column;
            align-items: center;
            gap: 14px;
            font-size: 25.600px;
            line-height: 40px;
            color: #62605e;
        }
        .page-icon {
            width: 46px;
            height: 58px;
            margin-left: -2px;
            color: #4c4a48;
        }
        .team span {
            padding-right: 2px;
        }
        .rivals {
            height: 75px;
            line-height: 69px;
            text-align: center;
            color: #62605e;
            font-size: 22.700px;
            border-bottom: 4px solid #dedede;
        }
        .pager {
            display: flex;
            align-items: center;
            height: 62px;
            padding: 0 43px 0 45px;
            font-size: 19px;
            color: #55534f;
        }
        .pager .icon {
            width: 22px;
            height: 22px;
            color: #a3a19f;
            margin-left: 25px;
            margin-bottom: 4px;
        }
        .pager span {
            margin-right: auto;
            padding-top: 4px;
        }
        .pager b {
            font-weight: 400;
            width: 57px;
            margin: 2px 3px 0 26px;
            font-size: 18.500px;
            font-feature-settings: "palt";
            letter-spacing: -1.500px;
        }
        .contact {
            left: 27px;
            top: 98px;
            width: 248px;
            height: 91px;
        }
        .edge {
            position: absolute;
            left: 25px;
            top: 114px;
            width: 8px;
            height: 60px;
            border-radius: 8px;
            background: #444;
        }
    `];

    private head(text: string) {
        return html`<div class="head">${text}${dots()}</div>`;
    }

    protected render(): unknown {
        return html`
            <div class="card assistant">
                <h3>アシスタント</h3>
                <div class="notice">通知</div>
                <div class="none">通知または提案がありません</div>
                <div class="hint">新着情報を後で確認して、最新の情報を常に把握してください。</div>
            </div>
            <div class="card related">
                ${this.head("関係者")}
                <div class="stakeholders">${dots()}</div>
                ${this.head("営業チーム")}
                <div class="team">
                    <svg class="page-icon" viewBox="0 0 46 58" fill="none" stroke="currentColor" stroke-width="2.6">
                        <path d="M1.500 1.500h29l14 15v40h-43zM30 1.500v16h14M11 27h24M11 34.500h24M11 42h24"/>
                    </svg>
                    <span>使用できるデータがありません。</span>
                </div>
                ${this.head("競合企業")}
                <div class="rivals">使用できるデータはありません</div>
                <div class="pager"><span>0 - 0/0</span>${icon("first")}${icon("back")}<b>ページ 1</b>${icon("forward")}</div>
                <div class="edge"></div>
                <div class="mask contact"></div>
            </div>
        `;
    }
}

@customElement("app-root")
class AppRoot extends LitElement {
    static styles = [base, css`
        :host {
            width: 3072px;
            height: 1748px;
            overflow: hidden;
            background: #fff;
            font-family: "Open Sans", "Noto Sans CJK JP", sans-serif;
        }
        .page {
            display: flex;
        }
        .main {
            width: 2680px;
            height: 1663px;
            margin-left: -2px;
            overflow: hidden;
        }
        .form {
            position: relative;
            height: 1321px;
            background: #faf9f8;
            display: flex;
            align-items: flex-start;
            gap: 25px;
            padding-left: 27px;
        }
        .middle {
            width: 1069px;
        }
        .thumb {
            position: absolute;
            right: 11px;
            top: 33px;
            width: 10px;
            height: 782px;
            border-radius: 5px;
            background: #868686;
        }
        .rail {
            flex: 1;
            background: #f7f6f5;
            padding: 20px 0 0 24px;
            color: #3b3a39;
        }
    `];

    protected render(): unknown {
        return html`
            <top-bar></top-bar>
            <div class="page">
                <side-nav></side-nav>
                <div class="main">
                    <command-bar></command-bar>
                    <record-header></record-header>
                    <process-flow></process-flow>
                    <tab-strip></tab-strip>
                    <div class="form">
                        <summary-column></summary-column>
                        <div class="middle">
                            <next-card></next-card>
                            <timeline-card></timeline-card>
                        </div>
                        <related-column></related-column>
                        <div class="thumb"></div>
                    </div>
                </div>
                <div class="rail">${icon("chat")}</div>
            </div>
        `;
    }
}
